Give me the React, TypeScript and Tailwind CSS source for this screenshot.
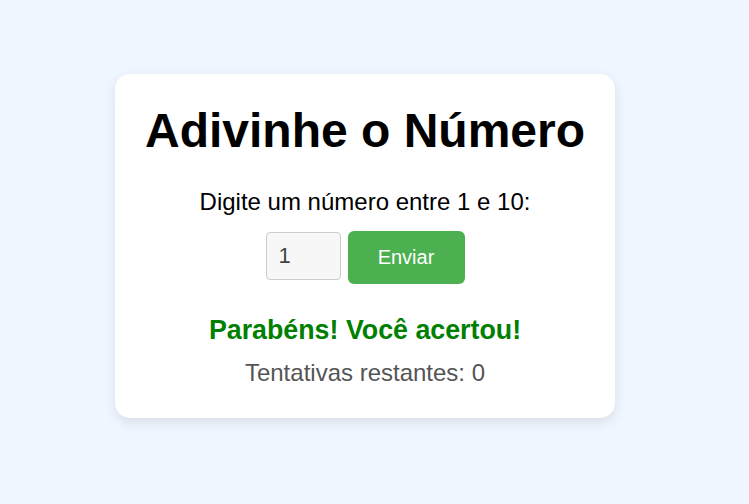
export default function App() {
  return (
    <div className="min-h-screen bg-[#eff6ff] flex items-center justify-center pr-[19px] pb-[13px] font-['Liberation_Sans',Arial,sans-serif]">
      <div className="w-[500px] bg-white rounded-[15px] shadow-[0_4px_12px_rgba(0,0,0,0.1)] pt-[29px] pb-[31px] flex flex-col items-center text-center">
        <h1 className="text-[48px] leading-[56px] font-bold text-black">Adivinhe o Número</h1>
        <p className="mt-[29px] text-[24px] leading-[28px] text-black">Digite um número entre 1 e 10:</p>
        <div className="mt-[15px] flex items-center gap-[7px]">
          <input
            type="number"
            defaultValue={1}
            className="w-[75px] h-[48px] mt-[-2px] pl-[12px] pr-[8px] bg-[#f7f7f7] border border-[#ccc] rounded-[4px] text-[22px] text-[#444] outline-none [appearance:textfield] [&::-webkit-inner-spin-button]:appearance-none"
          />
          <button className="w-[117px] h-[53px] bg-[#4caf50] text-white text-[20px] rounded-[6px]">Enviar</button>
        </div>
        <p className="mt-[31px] text-[26.8px] leading-[30px] font-bold text-[#008000]">Parabéns! Você acertou!</p>
        <p className="mt-[14px] text-[24px] leading-[28px] text-[#555]">Tentativas restantes: 0</p>
      </div>
    </div>
  )
}
